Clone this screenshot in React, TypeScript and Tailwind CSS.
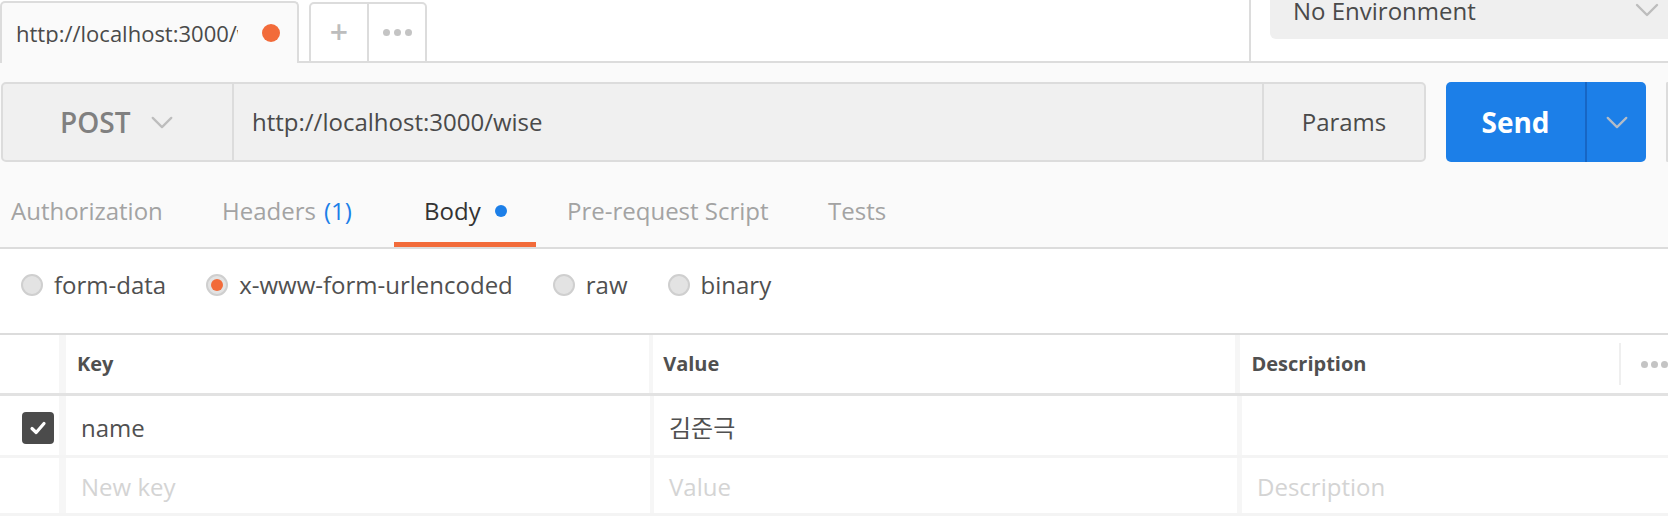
import React from 'react';

const Chevron = ({ className }: { className?: string }) => (
  <svg className={className} viewBox="0 0 24 14" fill="none">
    <polyline points="2,2 12,12 22,2" stroke="currentColor" strokeWidth="2.4" strokeLinecap="round" strokeLinejoin="round" />
  </svg>
);

const Radio = ({ checked, label }: { checked?: boolean; label: string }) => (
  <div className="flex items-center">
    <span className="w-[22px] h-[22px] rounded-full bg-[#e3e3e3] border-2 border-[#cfcfcf] flex items-center justify-center">
      {checked && <span className="w-[12px] h-[12px] rounded-full bg-[#f26b3a]" />}
    </span>
    <span className="ml-[11px] text-[24px] text-[#505050] leading-none">{label}</span>
  </div>
);

export default function App() {
  return (
    <div className="w-[1668px] h-[516px] overflow-hidden bg-white font-['Open_Sans','Noto_Sans_CJK_KR',sans-serif]">
      {/* top tab strip */}
      <div className="flex h-[63px]">
        <div className="w-[299px] shrink-0 mt-[1px] rounded-t-[5px] border-2 border-b-0 border-[#dcdcdc] bg-[#fafafa] flex items-center pl-[14px]">
          <div className="w-[222px] overflow-hidden whitespace-nowrap text-[22px] text-[#4a4a4a] leading-none">http://localhost:3000/wise</div>
          <span className="ml-[24px] w-[18px] h-[18px] rounded-full bg-[#f26b3a]" />
        </div>
        <div className="w-[10px] shrink-0 border-b-2 border-[#dcdcdc]" />
        <div className="w-[118px] shrink-0 mt-[2px] rounded-t-[5px] border-2 border-[#dcdcdc] bg-white flex">
          <div className="w-[58px] border-r-2 border-[#dcdcdc] flex items-center justify-center text-[#bdbdbd] text-[32px] font-semibold leading-none pb-[2px]">+</div>
          <div className="flex-1 flex items-center justify-center gap-[4px]">
            <span className="w-[7px] h-[7px] rounded-full bg-[#c4c4c4]" />
            <span className="w-[7px] h-[7px] rounded-full bg-[#c4c4c4]" />
            <span className="w-[7px] h-[7px] rounded-full bg-[#c4c4c4]" />
          </div>
        </div>
        <div className="w-[822px] shrink-0 border-b-2 border-[#dcdcdc]" />
        <div className="w-[2px] shrink-0 bg-[#dcdcdc]" />
        <div className="w-[19px] shrink-0 border-b-2 border-[#dcdcdc]" />
        <div className="flex-1 border-b-2 border-[#dcdcdc]">
          <div className="h-[39px] bg-[#efefef] rounded-bl-[6px] flex items-center pl-[23px] pr-[8px]">
            <span className="text-[24px] text-[#4a4a4a] leading-none -mt-[18px]">No Environment</span>
            <Chevron className="ml-auto w-[26px] h-[14px] text-[#bdbdbd] -mt-[20px]" />
          </div>
        </div>
      </div>

      {/* request area */}
      <div className="bg-[#fafafa]">
        <div className="flex pt-[19px] pl-[1px]">
          <div className="w-[1425px] shrink-0 h-[80px] rounded-[5px] border-2 border-[#dcdcdc] bg-[#f0f0f0] flex">
            <div className="w-[231px] border-r-2 border-[#dcdcdc] flex items-center pl-[57px]">
              <span className="text-[28px] font-semibold text-[#808080] leading-none">POST</span>
              <Chevron className="ml-[20px] w-[24px] h-[13px] text-[#bdbdbd]" />
            </div>
            <div className="flex-1 flex items-center pl-[18px] text-[24px] text-[#4a4a4a] leading-none">http://localhost:3000/wise</div>
            <div className="w-[162px] border-l-2 border-[#dcdcdc] flex items-center justify-center text-[24px] text-[#4a4a4a] leading-none">Params</div>
          </div>
          <div className="ml-[20px] w-[200px] shrink-0 h-[80px] rounded-[5px] bg-[#1c7fe8] flex">
            <div className="w-[139px] flex items-center justify-center text-[28px] font-bold text-white leading-none">Send</div>
            <div className="w-[2px] bg-[#1766c4]" />
            <div className="flex-1 flex items-center justify-center">
              <Chevron className="w-[24px] h-[13px] text-[#b3bcc7]" />
            </div>
          </div>
          <div className="ml-[20px] flex-1 h-[80px] rounded-l-[5px] border-2 border-r-0 border-[#dcdcdc] bg-[#f0f0f0]" />
        </div>

        {/* sub tabs */}
        <div className="flex items-end h-[87px] border-b-2 border-[#dcdcdc] text-[24px] leading-none">
          <div className="w-[222px] pl-[11px] h-[68px] pt-[1px] border-b-[5px] border-transparent flex items-center text-[#a3a3a3]">Authorization</div>
          <div className="w-[172px] h-[68px] pt-[1px] border-b-[5px] border-transparent flex items-center text-[#a3a3a3]">
            Headers <span className="ml-[8px] text-[#1c7fe8]">(1)</span>
          </div>
          <div className="w-[142px] pl-[30px] h-[68px] pt-[1px] border-b-[5px] border-[#f26b3a] flex items-center text-[#333333]">
            Body <span className="ml-[14px] w-[12px] h-[12px] rounded-full bg-[#1c7fe8]" />
          </div>
          <div className="w-[292px] pl-[31px] h-[68px] pt-[1px] border-b-[5px] border-transparent flex items-center text-[#a3a3a3]">Pre-request Script</div>
          <div className="h-[68px] pt-[1px] border-b-[5px] border-transparent flex items-center text-[#a3a3a3]">Tests</div>
        </div>
      </div>

      {/* body type */}
      <div className="h-[72px] flex items-center pl-[21px] gap-[40px]">
        <Radio label="form-data" />
        <Radio checked label="x-www-form-urlencoded" />
        <Radio label="raw" />
        <Radio label="binary" />
      </div>

      {/* key/value table */}
      <div className="mt-[12px] border-t-2 border-[#dcdcdc]">
        <div className="flex h-[61px] border-b-[3px] border-[#e2e2e2] text-[20px] font-bold text-[#505050] leading-none">
          <div className="w-[59px]" />
          <div className="w-[591px] border-l-[7px] border-[#f6f6f6] pl-[11px] flex items-center">Key</div>
          <div className="w-[587px] border-l-[4px] border-[#f6f6f6] pl-[10px] flex items-center">Value</div>
          <div className="w-[384px] border-l-[5px] border-[#f6f6f6] pl-[11px] flex items-center">Description</div>
          <div className="flex-1 flex items-center">
            <div className="w-[2px] h-[42px] bg-[#efefef]" />
            <div className="ml-[20px] flex gap-[3px]">
              <span className="w-[7px] h-[7px] rounded-full bg-[#c4c4c4]" />
              <span className="w-[7px] h-[7px] rounded-full bg-[#c4c4c4]" />
              <span className="w-[7px] h-[7px] rounded-full bg-[#c4c4c4]" />
            </div>
          </div>
        </div>
        <div className="flex h-[62px] border-b-[3px] border-[#f4f4f4] text-[24px] text-[#505050] leading-none">
          <div className="w-[59px] flex items-center pl-[22px] pt-[5px]">
            <span className="w-[32px] h-[32px] rounded-[4px] bg-[#4b4b4b] flex items-center justify-center">
              <svg viewBox="0 0 20 20" className="w-[20px] h-[20px]" fill="none">
                <polyline points="4,10.5 8.2,14.5 16,5.5" stroke="white" strokeWidth="3.2" strokeLinecap="round" strokeLinejoin="round" />
              </svg>
            </span>
          </div>
          <div className="w-[591px] border-l-[7px] border-[#f6f6f6] pl-[15px] pt-[5px] flex items-center">name</div>
          <div className="w-[587px] border-l-[4px] border-[#f6f6f6] pl-[15px] pt-[5px] flex items-center">김준극</div>
          <div className="w-[384px] border-l-[5px] border-[#f6f6f6]" />
          <div className="flex-1" />
        </div>
        <div className="flex h-[58px] border-b-[3px] border-[#f4f4f4] text-[24px] text-[#d4d4d4] leading-none">
          <div className="w-[59px]" />
          <div className="w-[591px] border-l-[7px] border-[#f6f6f6] pl-[15px] pt-[3px] flex items-center">New key</div>
          <div className="w-[587px] border-l-[4px] border-[#f6f6f6] pl-[15px] pt-[3px] flex items-center">Value</div>
          <div className="w-[384px] border-l-[5px] border-[#f6f6f6] pl-[15px] pt-[3px] flex items-center">Description</div>
          <div className="flex-1" />
        </div>
      </div>
    </div>
  );
}
